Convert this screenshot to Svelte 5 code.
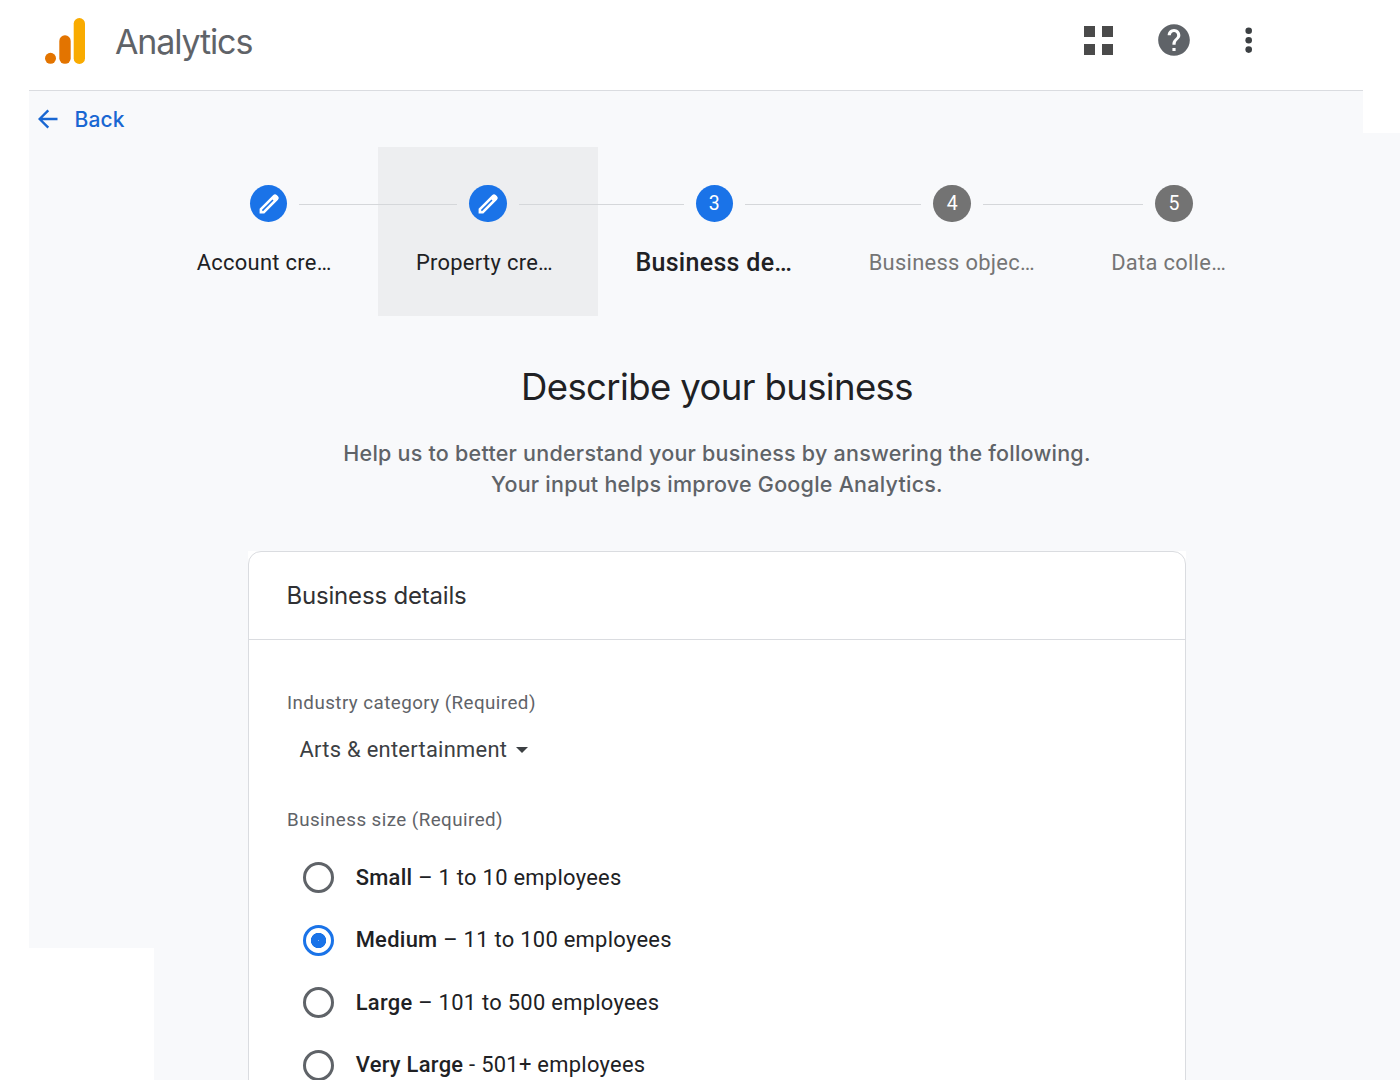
<script>
  const steps = [
    { label: 'Account cre…', state: 'done' },
    { label: 'Property cre…', state: 'done', hovered: true },
    { label: 'Business de…', state: 'current' },
    { label: 'Business objec…', state: 'todo' },
    { label: 'Data colle…', state: 'todo' }
  ];

  const sizes = [
    { id: 'small', name: 'Small', range: '– 1 to 10 employees' },
    { id: 'medium', name: 'Medium', range: '– 11 to 100 employees' },
    { id: 'large', name: 'Large', range: '– 101 to 500 employees' },
    { id: 'xlarge', name: 'Very Large', range: '- 501+ employees' }
  ];

  let selected = $state('medium');
</script>

<div class="page">
  <header>
    <svg class="logo" width="40" height="46" viewBox="0 0 40 46" aria-hidden="true">
      <circle cx="5.5" cy="40.3" r="5.5" fill="#e37400" />
      <rect x="14.3" y="17.3" width="11.4" height="28.5" rx="5.6" fill="#e37400" />
      <rect x="28.7" y="0" width="11.3" height="46" rx="5.6" fill="#f9ab00" />
    </svg>
    <span class="product">Analytics</span>
    <nav>
      <svg width="29" height="30" viewBox="0 0 29 30" fill="#4a4a4a" aria-hidden="true">
        <path d="M0 1h11v11H0zM18 1h11v11H18zM0 19h11v11H0zM18 19h11v11H18z" />
      </svg>
      <svg width="38" height="38" viewBox="0 0 24 24" fill="#5f6368" aria-hidden="true">
        <path d="M12 2C6.480 2 2 6.480 2 12s4.480 10 10 10 10-4.480 10-10S17.520 2 12 2zm1 17h-2v-2h2v2zm2.070-7.750l-.9.920C13.450 12.900 13 13.500 13 15h-2v-.5c0-1.100.45-2.100 1.170-2.830l1.240-1.260c.37-.36.59-.86.59-1.410 0-1.100-.9-2-2-2s-2 .9-2 2H8c0-2.210 1.790-4 4-4s4 1.790 4 4c0 .88-.36 1.680-.93 2.250z" />
      </svg>
      <svg width="8" height="26" viewBox="0 0 8 26" fill="#3c4043" aria-hidden="true">
        <circle cx="3.700" cy="3.800" r="3.300" /><circle cx="3.700" cy="13.200" r="3.300" /><circle cx="3.700" cy="22.600" r="3.300" />
      </svg>
    </nav>
  </header>

  <main>
    <div class="back">
      <svg width="20" height="20" viewBox="0 0 20 20" fill="none" stroke="#1967d2" stroke-width="2.400" aria-hidden="true">
        <path d="M19.500 10H2M10.300 1.300L1.600 10l8.700 8.700" />
      </svg>
      <span>Back</span>
    </div>

    <div class="stepper">
      {#each steps as step, i}
        <div class="step {step.state}" class:hovered={step.hovered}>
          <div class="track">
            <i class="line"></i>
            <span class="badge">
              {#if step.state === 'done'}
                <svg width="21" height="21" viewBox="0 0 21 21" fill="none" stroke="#fff" aria-hidden="true">
                  <path d="M.6 20.400v-4.700L14.300 2q1.700-1.700 3.400 0l1.300 1.300q1.700 1.700 0 3.400L5.300 20.400z" fill="#fff" stroke="none" />
                  <path d="M3.400 17.600L14 7" stroke="#1a73e8" stroke-width="1.500" />
                </svg>
              {:else}
                {i + 1}
              {/if}
            </span>
            <i class="line"></i>
          </div>
          <div class="label">{step.label}</div>
        </div>
      {/each}
    </div>

    <section class="content">
      <h1>Describe your business</h1>
      <p class="intro">
        Help us to better understand your business by answering the following.<br />
        Your input helps improve Google Analytics.
      </p>

      <div class="backing">
        <div class="card">
          <h2>Business details</h2>
          <div class="fields">
            <div class="caption">Industry category (Required)</div>
            <div class="select">
              <span>Arts &amp; entertainment</span>
              <svg width="12" height="6" viewBox="0 0 12 6" fill="#3c4043" aria-hidden="true"><path d="M0 0h12L6 6z" /></svg>
            </div>
            <div class="caption">Business size (Required)</div>
            <div class="options">
              {#each sizes as size}
                <label>
                  <input type="radio" name="size" value={size.id} bind:group={selected} />
                  <span class="text"><b>{size.name}</b> {size.range}</span>
                </label>
              {/each}
            </div>
          </div>
        </div>
      </div>
    </section>
  </main>
</div>

<style>
  :global(body) {
    margin: 0;
    background: #fff;
  }
  .page {
    width: 1400px;
    height: 1080px;
    overflow: hidden;
    display: flex;
    flex-direction: column;
    font-family: Roboto, sans-serif;
    color: #202124;
    white-space: nowrap;
  }
  svg {
    display: block;
    flex: none;
  }
  header {
    box-sizing: border-box;
    height: 91px;
    flex: none;
    margin: 0 37px 0 29px;
    padding: 0 110.500px 9px 16px;
    border-bottom: 1px solid #dadce0;
    display: flex;
    align-items: center;
  }
  .product {
    margin: 2px 0 0 30px;
    font: 400 34px/46px Inter, sans-serif;
    letter-spacing: -1.130px;
    color: #5f6368;
  }
  nav {
    margin: -1px 0 0 auto;
    display: flex;
    align-items: center;
    gap: 41px;
  }
  nav svg:first-child {
    margin-right: 0.700px;
  }
  nav svg:last-child {
    margin-left: 11px;
  }
  main {
    flex: 1;
    min-height: 0;
    overflow: hidden;
    margin-left: 29px;
    background: #f8f9fb;
    /* stepped outline: notched at the top right and the bottom left */
    clip-path: polygon(0 0, 1334px 0, 1334px 42px, 100% 42px, 100% 100%, 125px 100%, 125px 857px, 0 857px);
  }
  .back {
    height: 56px;
    padding-left: 9px;
    display: flex;
    align-items: center;
    gap: 16.500px;
    font: 500 21px/54px Inter, sans-serif;
    letter-spacing: 0.1px;
    color: #1967d2;
  }
  .back span {
    padding-top: 2px;
  }
  .stepper {
    display: grid;
    grid-template-columns: 219.200px 219.500px 233.300px 242.500px 201px;
    height: 169px;
    padding-left: 130px;
  }
  .step {
    padding-top: 37.500px;
  }
  .hovered {
    background: #edeef0;
  }
  .track {
    display: grid;
    grid-template-columns: 1fr 37.500px 1fr;
    gap: 12px;
    align-items: center;
  }
  .line {
    height: 1px;
    margin-top: 2px;
    background: #d5d7da;
  }
  .step:first-child .line:first-child,
  .step:last-child .line:last-child {
    visibility: hidden;
  }
  .badge {
    height: 37.500px;
    border-radius: 50%;
    display: grid;
    place-items: center;
    background: #1a73e8;
    color: #fff;
    font-size: 19.500px;
  }
  .badge svg {
    margin: 1px 0 0 1px;
  }
  .todo .badge {
    background: #737373;
  }
  .label {
    padding: 22px 0 0 37.700px;
    font-size: 21.900px;
    line-height: 38px;
    letter-spacing: 0.3px;
  }
  .current .label {
    font-size: 25px;
    font-weight: 500;
    letter-spacing: 0.3px;
  }
  .todo .label {
    color: #757575;
  }
  .content {
    width: 938px;
    margin-left: 219px;
    text-align: center;
  }
  h1 {
    margin: 0;
    padding-top: 46px;
    font: 400 36.500px/50px Inter, sans-serif;
    letter-spacing: -0.620px;
  }
  .intro {
    margin: 26px 0 0;
    font: 500 21.500px/31px Inter, sans-serif;
    letter-spacing: 0.235px;
    color: #5f6368;
  }
  .backing {
    margin-top: 51px;
    background: #fff;
  }
  .card {
    box-sizing: border-box;
    height: 620px;
    border: 1px solid #dadce0;
    border-radius: 13px;
    text-align: left;
  }
  h2 {
    margin: 0;
    padding-left: 37.500px;
    border-bottom: 1px solid #dadce0;
    font: 400 24px/87px Inter, sans-serif;
    letter-spacing: -0.190px;
    color: #303134;
  }
  .fields {
    padding: 48px 38px 0;
  }
  .caption {
    font-size: 18.750px;
    line-height: 30px;
    letter-spacing: 0.450px;
    color: #5f6368;
  }
  .select {
    display: flex;
    align-items: center;
    gap: 9px;
    padding: 12px 0 35px 12.500px;
    font-size: 21.900px;
    line-height: 40px;
    letter-spacing: 0.280px;
    color: #3c4043;
  }
  .options {
    display: flex;
    flex-direction: column;
    padding: 11.500px 0 0 16px;
  }
  label {
    height: 62.500px;
    display: flex;
    align-items: center;
    gap: 21.700px;
    font-size: 21.900px;
    letter-spacing: 0.290px;
  }
  .text {
    padding-bottom: 1px;
  }
  b {
    font-weight: 500;
  }
  input {
    appearance: none;
    box-sizing: border-box;
    flex: none;
    width: 31px;
    height: 31px;
    margin: 0;
    border: 3px solid #5f6368;
    border-radius: 50%;
  }
  input:checked {
    border-color: #1a73e8;
    background: radial-gradient(circle, #8ab8f5 0.5px, #1a73e8 1px 7.300px, transparent 8px);
  }
</style>
